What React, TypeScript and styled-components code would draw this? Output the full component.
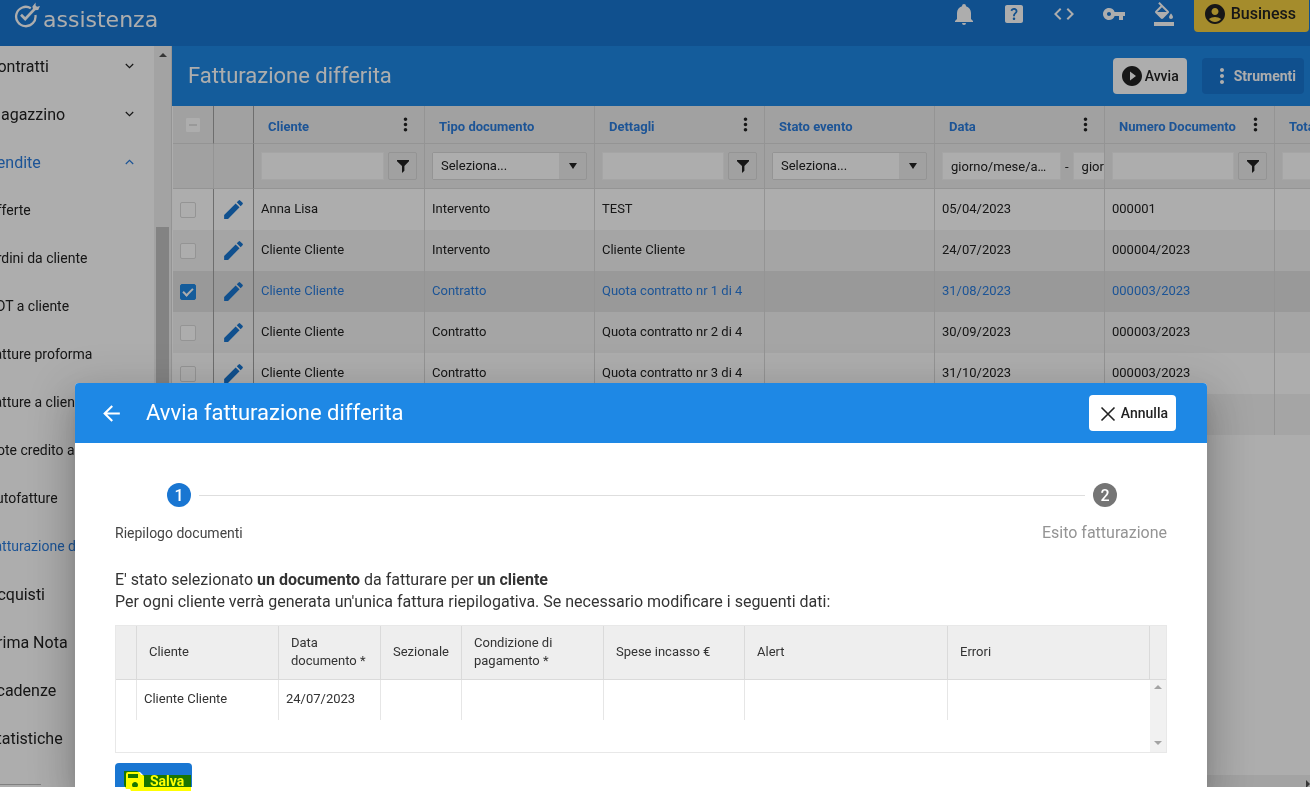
import React from "react";
import styled, { createGlobalStyle, css } from "styled-components";
import {
  MdAccountCircle,
  MdArrowBack,
  MdCode,
  MdEdit,
  MdFormatColorFill,
  MdHelpCenter,
  MdMoreVert,
  MdPlayCircleFilled,
  MdSave,
  MdVpnKey,
} from "react-icons/md";

const c = {
  primary: "#1e88e5",
  primaryDark: "#1976d2",
  gold: "#f4cf41",
  text: "#222222",
  link: "#2b7ddd",
  head: "#eeeeee",
  line: "#dadada",
  lineStrong: "#a3a3a3",
};

const GlobalStyle = createGlobalStyle`
  *, *::before, *::after { box-sizing: border-box; }
  body {
    margin: 0;
    overflow: hidden;
    background: #fff;
    color: ${c.text};
    font-family: Roboto, "Liberation Sans", sans-serif;
    font-size: 13px;
  }
  button, input, select { font: inherit; color: inherit; }
  button { cursor: pointer; }
  svg { display: block; flex: none; }
`;

/* ---------- shell ---------- */

const Root = styled.div`
  position: relative;
  display: flex;
  height: 100vh;
  padding-bottom: 4px;
`;

const Screen = styled.div`
  position: relative;
  display: flex;
  flex: 1;
  flex-direction: column;
  min-width: 0;
  overflow: hidden;
`;

const TopBar = styled.header`
  display: flex;
  flex: none;
  align-items: center;
  justify-content: space-between;
  height: 46px;
  padding: 0 1px 18px 14px;
  background: ${c.primaryDark};
  color: #fff;
`;

const Brand = styled.a`
  display: flex;
  align-items: center;
  gap: 3px;
  color: #fff;
  font-family: "DejaVu Sans", sans-serif;
  font-size: 22px;
  line-height: 28px;
  text-decoration: none;

  svg { margin-top: 2px; }
  span { padding-top: 11px; }
`;

const Tools = styled.div`
  display: flex;
  align-items: center;
`;

const IconButton = styled.button`
  display: flex;
  justify-content: center;
  width: 50px;
  padding: 0;
  border: 0;
  background: none;
`;

const Button = styled.button<{ $tone: "gold" | "light" | "blue" }>`
  display: flex;
  align-items: center;
  height: 36px;
  border: 0;
  border-radius: 4px;
  color: ${c.text};
  font-size: 14px;
  font-weight: 500;
  line-height: 20px;
  white-space: nowrap;
  ${({ $tone }) =>
    ({
      gold: css`
        gap: 4px;
        margin-left: 5px;
        padding: 0 13px 0 9px;
        background: ${c.gold};
        font-size: 16px;
      `,
      light: css`
        gap: 1px;
        padding: 0 8px 1px 7px;
        background: #fff;
      `,
      blue: css`
        padding: 0 8px 1px;
        background: ${c.primaryDark};
        color: #fff;
        font-weight: 700;
      `,
    })[$tone]}
`;

const Body = styled.div`
  display: flex;
  flex: 1;
  min-height: 0;
`;

/* ---------- side menu ---------- */

const SideNav = styled.nav`
  display: flex;
  flex: none;
  width: 172px;
  overflow: hidden;
  border-right: 1px solid ${c.line};
`;

const Menu = styled.ul`
  flex: 1;
  min-width: 0;
  margin: -4px 0 0 -13px;
  padding: 0;
  list-style: none;
`;

const MenuItem = styled.li<{ $sub?: boolean; $active?: boolean }>`
  font-size: ${({ $sub }) => ($sub ? 14 : 16)}px;
  color: ${({ $active }) => ($active ? c.link : c.text)};

  a {
    display: flex;
    align-items: center;
    justify-content: space-between;
    height: 48px;
    padding-right: 20px;
    color: inherit;
    text-decoration: none;
    white-space: nowrap;
  }
`;

const MenuRule = styled.hr`
  width: 54px;
  margin: 22px 0 0;
  border: 0;
  border-top: 1px solid #bdbdbd;
`;

const VerticalBar = styled.div`
  display: flex;
  flex-direction: column;
  align-items: center;
  width: 17px;
  padding: 7px 2px 0;
  background: #f1f1f1;
`;

const Thumb = styled.div`
  flex: 1;
  width: 13px;
  margin-top: 170px;
  background: #c1c1c1;
`;

/* ---------- main grid ---------- */

const Main = styled.main`
  display: flex;
  flex: 1;
  flex-direction: column;
  min-width: 0;
`;

const PageHead = styled.div`
  display: flex;
  flex: none;
  align-items: center;
  justify-content: space-between;
  height: 60px;
  padding: 0 6px 0 16px;
  background: ${c.primary};

  h1 {
    margin: 0;
    color: #fff;
    font-size: 22px;
    font-weight: 400;
    line-height: 28px;
  }
  div { display: flex; gap: 15px; }
`;

const GridArea = styled.div`
  flex: 1;
  min-height: 0;
  padding-left: 1px;
  overflow: hidden;
`;

const Grid = styled.table`
  width: 1272px;
  table-layout: fixed;
  border-spacing: 0;

  th, td {
    padding: 0 7px;
    border-right: 1px solid ${c.line};
    text-align: left;
    white-space: nowrap;
    overflow: hidden;
  }
  th:nth-child(2), td:nth-child(2), th:first-child, tbody td:first-child {
    border-right-color: ${c.lineStrong};
  }
  thead th, thead td {
    background: ${c.head};
    border-bottom: 1px solid ${c.line};
  }
  thead th { height: 38px; padding: 4px 8px 0 14px; color: ${c.link}; font-weight: 700; }
  thead td { height: 45px; }
  thead th:first-child { padding: 0 0 0 12px; }
  tbody td { padding-bottom: 2px; }
`;

const HeadCell = styled.div`
  display: flex;
  align-items: center;
  justify-content: space-between;
  height: 22px;

  svg { margin-top: -4px; color: ${c.text}; }
`;

const Row = styled.tr<{ $selected?: boolean }>`
  height: 41px;
  background: ${({ $selected }) => ($selected ? "#e2e2e2" : "#fff")};
  color: ${({ $selected }) => ($selected ? c.link : c.text)};

  &:nth-child(even) { background: #f3f3f3; }
  td:nth-child(2) svg { margin-top: 2px; color: ${c.primaryDark}; }
`;

const CheckBox = styled.input<{ $mixed?: boolean }>`
  display: flex;
  align-items: center;
  justify-content: center;
  width: 16px;
  height: 16px;
  margin: ${({ $mixed }) => ($mixed ? "0" : "3px 0 0")};
  border: 1px solid ${({ $mixed }) => ($mixed ? "#eeeeee" : c.line)};
  border-radius: 2px;
  background: #fff;
  appearance: none;

  ${({ $mixed }) =>
    $mixed &&
    css`
      &::after { content: ""; width: 8px; height: 2px; background: #e2e2e2; }
    `}
  &:checked { border-color: ${c.primary}; background: ${c.primary}; }
  &:checked::after {
    content: "";
    width: 10px;
    height: 6px;
    margin-top: -3px;
    border: solid #fff;
    border-width: 0 0 2px 2px;
    transform: rotate(-45deg);
  }
`;

const FilterLine = styled.div`
  display: flex;
  align-items: center;
  gap: 4px;
  height: 28px;
`;

const FilterInput = styled.input<{ $date?: boolean }>`
  flex: ${({ $date }) => ($date ? "none" : "1")};
  width: ${({ $date }) => ($date ? "119px" : "0")};
  height: 28px;
  padding: 1px 8px 0;
  border: 1px solid #f3f3f3;
  background: #fff;
  text-overflow: ellipsis;

  &::placeholder { color: ${c.text}; opacity: 1; }
`;

const FilterButton = styled.button`
  display: flex;
  align-items: center;
  justify-content: center;
  width: 29px;
  height: 28px;
  padding: 0;
  border: 1px solid ${c.line};
  border-radius: 2px;
  background: ${c.head};
`;

const SelectBox = styled.label`
  display: flex;
  height: 28px;
  width: 155px;
  border: 1px solid ${c.line};
  border-radius: 2px;
  background: ${c.head};

  select {
    flex: 1;
    padding: 0 8px 2px;
    border: 0;
    background: #fff;
    appearance: none;
  }
  span { display: grid; place-items: center; width: 27px; }
`;

const HorizontalBar = styled.div`
  display: flex;
  flex: none;
  align-items: center;
  justify-content: flex-end;
  height: 12px;
  padding-top: 5px;
  background: #f1f1f1;
`;

/* ---------- dialog ---------- */

const Backdrop = styled.div`
  position: absolute;
  inset: 0;
  display: flex;
  padding: 383px 103px 0 75px;
  background: rgba(0, 0, 0, 0.32);
`;

const Dialog = styled.section`
  flex: 1;
  min-width: 0;
  border-radius: 4px 4px 0 0;
  background: #fff;
  color: #333;
  box-shadow: 0 11px 15px -7px rgba(0, 0, 0, 0.2), 0 24px 38px 3px rgba(0, 0, 0, 0.14),
    0 9px 46px 8px rgba(0, 0, 0, 0.12);
`;

const DialogHead = styled.header`
  display: flex;
  align-items: center;
  height: 60px;
  padding: 0 31px 0 11px;
  border-radius: 4px 4px 0 0;
  background: ${c.primary};
  color: #fff;

  h2 {
    flex: 1;
    margin: 0 0 0 10px;
    font-size: 22px;
    font-weight: 400;
    line-height: 28px;
  }
`;

const DialogBody = styled.div`
  padding: 40px 40px 0;
`;

const StepTrack = styled.div`
  display: flex;
  align-items: center;
  gap: 8px;
  padding: 0 50px 0 52px;

  &::before { content: ""; order: 2; flex: 1; height: 1px; background: #dedede; }
`;

const StepDot = styled.span<{ $active?: boolean }>`
  display: grid;
  place-items: center;
  order: ${({ $active }) => ($active ? 1 : 3)};
  width: 24px;
  height: 24px;
  border-radius: 50%;
  background: ${({ $active }) => ($active ? c.primaryDark : "#757575")};
  color: #fff;
  font-size: 16px;
  font-weight: 500;
`;

const StepLabels = styled.div`
  display: flex;
  justify-content: space-between;
  margin-top: 16px;
  line-height: 20px;
  font-size: 16px;
  color: #949494;

  strong { color: #444; font-size: 14px; font-weight: 400; }
`;

const Intro = styled.p`
  margin: 26px 0 12px;
  font-size: 16px;
  line-height: 22px;
`;

const Summary = styled.table`
  width: 100%;
  table-layout: fixed;
  border: 1px solid #e8e8e8;
  border-spacing: 0;
  line-height: 18px;

  th, td {
    padding: 0 12px 2px;
    text-align: left;
    font-weight: 400;
    border-right: 1px solid #e6e6e6;
  }
  th { height: 54px; background: #eee; border-color: ${c.line}; border-bottom: 1px solid ${c.line}; }
  th:last-child, td:last-child { border-right: 0; }
  td { height: 40px; padding: 0 7px 2px; }
  tr:last-child td { height: 32px; border: 0; }
`;

const ScrollCell = styled.td`
  background: #f1f1f1;

  div {
    display: flex;
    flex-direction: column;
    align-items: center;
    justify-content: space-between;
    height: 60px;
    margin: 0 -7px;
  }
`;

const SaveButton = styled.button`
  display: flex;
  align-items: center;
  gap: 3px;
  height: 36px;
  margin-top: 10px;
  padding: 0 8px 1px;
  border: 0;
  border-radius: 4px;
  background: ${c.primaryDark};
  color: #fff;
  font-size: 14px;
  font-weight: 700;
`;

/* Highlighter stroke laid over the save button. */
const Marker = styled.svg`
  position: absolute;
  bottom: 0;
  left: 124px;
  mix-blend-mode: multiply;
  pointer-events: none;
`;

/* ---------- icons ---------- */

const LogoMark = () => (
  <svg width="26" height="28" viewBox="0 0 26 28" fill="none" stroke="#fff" strokeWidth="2.3">
    <path d="M16.8 7.2A9.7 9.7 0 1 0 21.4 14" />
    <path d="M7 13.8l4.2 4.2L21 7.6" strokeWidth="2.7" />
    <path d="M19.2 9.2L18.4 5.6l3.2-4v3l1.4 1.2 3-.8-1.8 4z" fill="#fff" stroke="none" />
  </svg>
);

const Bell = () => (
  <svg width="24" height="24" viewBox="0 0 24 24" fill="currentColor">
    <path d="M21,19V20H3V19L5,17V11C5,7.9 7.03,5.17 10,4.29C10,4.19 10,4.1 10,4A2,2 0 0,1 12,2A2,2 0 0,1 14,4C14,4.1 14,4.19 14,4.29C16.97,5.17 19,7.9 19,11V17L21,19M14,21A2,2 0 0,1 12,23A2,2 0 0,1 10,21" />
  </svg>
);

const Cross = () => (
  <svg width="24" height="24" viewBox="0 0 24 24" stroke="currentColor" strokeWidth="1.6">
    <path d="M5.5 6.5l13 13M18.5 6.5l-13 13" />
  </svg>
);

const Funnel = () => (
  <svg width="12" height="13" viewBox="0 0 12 13" fill="currentColor">
    <path d="M0 0h12v1.2L7.4 6v4.8L5 13V6L0 1.2z" />
  </svg>
);

const Chevron = ({ up }: { up?: boolean }) => (
  <svg width="9" height="6" viewBox="0 0 9 6" fill="none" stroke="currentColor" strokeWidth="1.2">
    <path d={up ? "M.8 5L4.5 1.3 8.2 5" : "M.8 1L4.5 4.7 8.2 1"} />
  </svg>
);

const paths = { up: "M0 4L4 0l4 4z", down: "M0 0h8L4 4z", right: "M0 0l4 4-4 4z", caret: "M0 0h8L4 6z" };

const Arrow = ({ dir, color = "currentColor" }: { dir: keyof typeof paths; color?: string }) => (
  <svg
    width={dir === "right" ? 4 : 8}
    height={dir === "right" ? 8 : dir === "caret" ? 6 : 4}
    fill={color}
  >
    <path d={paths[dir]} />
  </svg>
);

/* ---------- data ---------- */

type Entry = { label: string; sub?: boolean; active?: boolean; open?: boolean };

const menu: Entry[] = [
  { label: "Contratti", open: false },
  { label: "Magazzino", open: false },
  { label: "Vendite", open: true, active: true },
  { label: "Offerte", sub: true },
  { label: "Ordini da cliente", sub: true },
  { label: "DDT a cliente", sub: true },
  { label: "Fatture proforma", sub: true },
  { label: "Fatture a cliente", sub: true },
  { label: "Note credito a cliente", sub: true },
  { label: "Autofatture", sub: true },
  { label: "Fatturazione differita", sub: true, active: true },
  { label: "Acquisti" },
  { label: "Prima Nota" },
  { label: "Scadenze" },
  { label: "Statistiche" },
];

type Filter = "text" | "select" | "date";
const columns: { label: string; filter: Filter; menu?: boolean }[] = [
  { label: "Cliente", filter: "text", menu: true },
  { label: "Tipo documento", filter: "select" },
  { label: "Dettagli", filter: "text", menu: true },
  { label: "Stato evento", filter: "select" },
  { label: "Data", filter: "date", menu: true },
  { label: "Numero Documento", filter: "text", menu: true },
  { label: "Totale", filter: "text", menu: true },
];

const rows = [
  ["Anna Lisa", "Intervento", "TEST", "", "05/04/2023", "000001", ""],
  ["Cliente Cliente", "Intervento", "Cliente Cliente", "", "24/07/2023", "000004/2023", ""],
  ["Cliente Cliente", "Contratto", "Quota contratto nr 1 di 4", "", "31/08/2023", "000003/2023", ""],
  ["Cliente Cliente", "Contratto", "Quota contratto nr 2 di 4", "", "30/09/2023", "000003/2023", ""],
  ["Cliente Cliente", "Contratto", "Quota contratto nr 3 di 4", "", "31/10/2023", "000003/2023", ""],
  ["Cliente Cliente", "Contratto", "Quota contratto nr 4 di 4", "", "30/11/2023", "000003/2023", ""],
];
const selectedRow = 2;

const summaryColumns: [string, number | undefined][] = [
  ["", 21],
  ["Cliente", 142],
  ["Data documento *", 102],
  ["Sezionale", 81],
  ["Condizione di pagamento *", 142],
  ["Spese incasso €", 141],
  ["Alert", 203],
  ["Errori", undefined],
  ["", 16],
];

const FilterField = ({ label, kind }: { label: string; kind: Filter }) => {
  if (kind === "select")
    return (
      <SelectBox>
        <select aria-label={`Filtro ${label}`}>
          <option>Seleziona...</option>
        </select>
        <span>
          <Arrow dir="caret" />
        </span>
      </SelectBox>
    );
  if (kind === "date")
    return (
      <FilterLine>
        <FilterInput $date aria-label={`${label} da`} placeholder="giorno/mese/anno" />
        <span>-</span>
        <FilterInput $date aria-label={`${label} a`} placeholder="giorno/mese/anno" />
      </FilterLine>
    );
  return (
    <FilterLine>
      <FilterInput aria-label={`Filtro ${label}`} />
      <FilterButton aria-label={`Opzioni filtro ${label}`}>
        <Funnel />
      </FilterButton>
    </FilterLine>
  );
};

export default function App() {
  return (
    <Root>
      <GlobalStyle />
      <Screen>
        <TopBar>
          <Brand href="#">
            <LogoMark />
            <span>assistenza</span>
          </Brand>
          <Tools>
            <IconButton aria-label="Notifiche"><Bell /></IconButton>
            <IconButton aria-label="Aiuto"><MdHelpCenter size={24} /></IconButton>
            <IconButton aria-label="Codice"><MdCode size={24} /></IconButton>
            <IconButton aria-label="Accesso"><MdVpnKey size={24} /></IconButton>
            <IconButton aria-label="Tema"><MdFormatColorFill size={24} /></IconButton>
            <Button $tone="gold">
              <MdAccountCircle size={24} />
              Business
            </Button>
          </Tools>
        </TopBar>

        <Body>
          <SideNav>
            <Menu>
              {menu.map((m) => (
                <MenuItem key={m.label} $sub={m.sub} $active={m.active}>
                  <a href="#">
                    {m.label}
                    {m.open !== undefined && <Chevron up={m.open} />}
                  </a>
                </MenuItem>
              ))}
              <li><MenuRule /></li>
            </Menu>
            <VerticalBar>
              <Arrow dir="up" color="#505050" />
              <Thumb />
            </VerticalBar>
          </SideNav>

          <Main>
            <PageHead>
              <h1>Fatturazione differita</h1>
              <div>
                <Button $tone="light">
                  <MdPlayCircleFilled size={24} />
                  Avvia
                </Button>
                <Button $tone="blue">
                  <MdMoreVert size={24} />
                  Strumenti
                </Button>
              </div>
            </PageHead>

            <GridArea>
              <Grid>
                <colgroup>
                  <col style={{ width: 41 }} />
                  <col style={{ width: 40 }} />
                  <col style={{ width: 171 }} />
                </colgroup>
                <thead>
                  <tr>
                    <th><CheckBox type="checkbox" $mixed aria-label="Seleziona tutto" /></th>
                    <th />
                    {columns.map((col) => (
                      <th key={col.label}>
                        <HeadCell>
                          {col.label}
                          {col.menu && <MdMoreVert size={21} />}
                        </HeadCell>
                      </th>
                    ))}
                  </tr>
                  <tr>
                    <td />
                    <td />
                    {columns.map((col) => (
                      <td key={col.label}>
                        <FilterField label={col.label} kind={col.filter} />
                      </td>
                    ))}
                  </tr>
                </thead>
                <tbody>
                  {rows.map((row, i) => (
                    <Row key={i} $selected={i === selectedRow}>
                      <td>
                        <CheckBox
                          type="checkbox"
                          defaultChecked={i === selectedRow}
                          aria-label={`Seleziona riga ${i + 1}`}
                        />
                      </td>
                      <td><MdEdit size={25} /></td>
                      {row.map((value, j) => (
                        <td key={j}>{value}</td>
                      ))}
                    </Row>
                  ))}
                </tbody>
              </Grid>
            </GridArea>
            <HorizontalBar>
              <Arrow dir="right" color="#505050" />
            </HorizontalBar>
          </Main>
        </Body>

        <Backdrop>
          <Dialog role="dialog" aria-labelledby="dialog-title">
            <DialogHead>
              <IconButton aria-label="Indietro"><MdArrowBack size={25} /></IconButton>
              <h2 id="dialog-title">Avvia fatturazione differita</h2>
              <Button $tone="light">
                <Cross />
                Annulla
              </Button>
            </DialogHead>
            <DialogBody>
              <StepTrack>
                <StepDot $active>1</StepDot>
                <StepDot>2</StepDot>
              </StepTrack>
              <StepLabels>
                <strong>Riepilogo documenti</strong>
                <span>Esito fatturazione</span>
              </StepLabels>
              <Intro>
                E' stato selezionato <b>un documento</b> da fatturare per <b>un cliente</b>
                <br />
                Per ogni cliente verrà generata un'unica fattura riepilogativa. Se necessario
                modificare i seguenti dati:
              </Intro>
              <Summary>
                <colgroup>
                  {summaryColumns.map(([, width], i) => (
                    <col key={i} style={{ width }} />
                  ))}
                </colgroup>
                <thead>
                  <tr>
                    {summaryColumns.map(([label], i) => (
                      <th key={i}>{label}</th>
                    ))}
                  </tr>
                </thead>
                <tbody>
                  <tr>
                    <td />
                    <td>Cliente Cliente</td>
                    <td>24/07/2023</td>
                    <td />
                    <td />
                    <td />
                    <td />
                    <td style={{ borderRight: 0 }} />
                    <ScrollCell rowSpan={2}>
                      <div>
                        <Arrow dir="up" color="#a3a3a3" />
                        <Arrow dir="down" color="#a3a3a3" />
                      </div>
                    </ScrollCell>
                  </tr>
                  <tr>
                    <td colSpan={8} />
                  </tr>
                </tbody>
              </Summary>
              <SaveButton>
                <MdSave size={24} />
                Salva
              </SaveButton>
            </DialogBody>
          </Dialog>
        </Backdrop>
      </Screen>
      <Marker width="67" height="20" viewBox="0 0 67 20" aria-hidden="true">
        <path d="M0 0h13q3 1 4 4h50v16H7l-1-2H2L0 14z" fill="#ffff00" />
      </Marker>
    </Root>
  );
}
